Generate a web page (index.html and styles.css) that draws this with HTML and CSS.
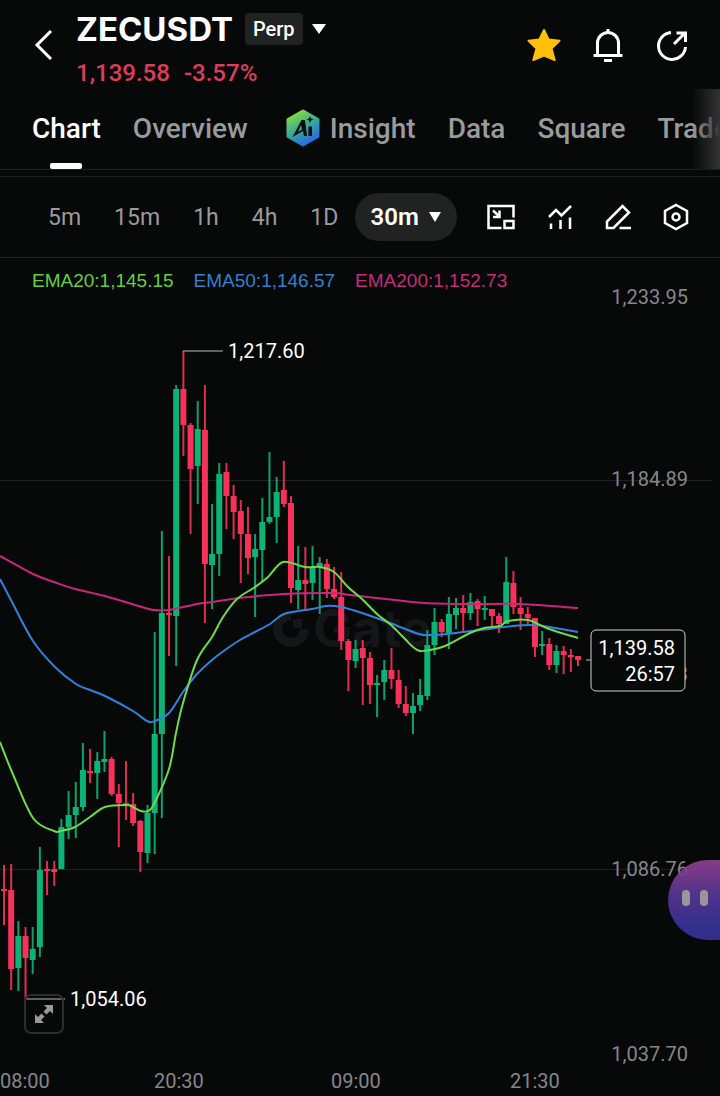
FILE: index.html
```html
<!DOCTYPE html>
<html lang="en">
<head>
    <meta charset="UTF-8">
    <meta name="viewport" content="width=device-width, initial-scale=1.0">
    <title>ZECUSDT Perp</title>
    <link rel="stylesheet" href="styles.css">
</head>
<body>
    <header class="header">
        <button class="icon-btn back-btn" aria-label="Back">
            <svg width="20" height="32" viewBox="0 0 20 32" fill="none" stroke="#fff" stroke-width="3"><path d="M17 2 3 16l14 14"/></svg>
        </button>
        <div class="pair">
            <div class="pair-row">
                <h1>ZECUSDT</h1>
                <button class="market-btn">
                    <span class="badge">Perp</span>
                    <svg width="14" height="10" viewBox="0 0 14 10" fill="#fff"><path d="M0 0h14L7 10z"/></svg>
                </button>
            </div>
            <div class="price-row"><span>1,139.58</span><span>-3.57%</span></div>
        </div>
        <div class="header-actions">
            <button class="icon-btn" aria-label="Favorite">
                <svg width="36" height="36" viewBox="0 0 36 36" fill="#ffc107" stroke="#ffc107" stroke-width="2" stroke-linejoin="round"><path d="m18 3 4.600 9.500 10.900 1.300-8 7.800 3.200 11.400-10.700-4.500-10.700 4.500 3.200-11.400-8-7.800 10.900-1.300z"/></svg>
            </button>
            <button class="icon-btn" aria-label="Alerts">
                <svg width="36" height="36" viewBox="0 0 36 36" fill="none" stroke="#fff" stroke-width="3"><path d="M3.500 28.500h29M7.500 28V16a10.500 10.500 0 0 1 21 0v12M18 2v4M14 33.500h8"/></svg>
            </button>
            <button class="icon-btn" aria-label="Share">
                <svg width="36" height="36" viewBox="0 0 36 36" fill="none" stroke="#fff" stroke-width="3"><path d="M17 5.500A13.500 13.500 0 1 0 31.500 20M20 17 31 6M22.500 6H31.500V15"/></svg>
            </button>
        </div>
    </header>

    <nav class="tabs">
        <a href="#chart" class="tab active">Chart</a>
        <a href="#overview" class="tab">Overview</a>
        <a href="#insight" class="tab tab-ai">
            <svg width="34" height="38" viewBox="0 0 34 38">
                <defs>
                    <linearGradient id="ai" x1="0.2" y1="0" x2="0.7" y2="1">
                        <stop offset="0.1" stop-color="#79d84b"/>
                        <stop offset="0.5" stop-color="#38a99a"/>
                        <stop offset="1" stop-color="#2b62e8"/>
                    </linearGradient>
                </defs>
                <path d="M17 2 32 10.500v17L17 36 2 27.500v-17z" fill="url(#ai)" stroke="url(#ai)" stroke-width="3" stroke-linejoin="round"/>
                <path d="M6.500 28 15.500 11h3.500l2 16h-3l-1-5zM12 23l4-2.500-1-4.500z" fill="#07100c" fill-rule="evenodd"/>
                <path d="M22.500 17.500H26V27h-3.500zM24 7l1 2.500 2.500 1-2.500 1-1 2.500-1-2.500-2.500-1 2.500-1z" fill="#07100c"/>
            </svg>
            Insight
        </a>
        <a href="#data" class="tab">Data</a>
        <a href="#square" class="tab">Square</a>
        <a href="#trade" class="tab">Trade</a>
    </nav>

    <div class="toolbar">
        <div class="intervals">
            <button>5m</button>
            <button>15m</button>
            <button>1h</button>
            <button>4h</button>
            <button>1D</button>
        </div>
        <label class="interval-select">
            <select aria-label="Interval">
                <option>30m</option>
                <option>2h</option>
                <option>1W</option>
            </select>
            <svg width="12" height="10" viewBox="0 0 12 10" fill="#fff"><path d="M0 0h12L6 10z"/></svg>
        </label>
        <div class="tools">
            <button class="icon-btn" aria-label="Floating window">
                <svg width="28" height="26" viewBox="0 0 28 26" fill="none" stroke="#fff" stroke-width="2.500"><path d="M14.500 24H1.500V2h25v11.500M17.500 17h9v7h-9zM6 6.500l6.500 6M12.500 6.500v6.500H6"/></svg>
            </button>
            <button class="icon-btn" aria-label="Indicators">
                <svg width="26" height="26" viewBox="0 0 26 26" fill="none" stroke="#fff" stroke-width="2.500"><path d="M2 13l7-7 5.500 5.500L24 2M4 19.500V25M13.500 16v9M23 13.500V25"/></svg>
            </button>
            <button class="icon-btn" aria-label="Draw">
                <svg width="26" height="26" viewBox="0 0 26 26" fill="none" stroke="#fff" stroke-width="2.500"><path d="M2 24v-6.500L17.500 2 24 8.500 8.500 24zM14.500 24H26"/></svg>
            </button>
            <button class="icon-btn" aria-label="Chart settings">
                <svg width="26" height="28" viewBox="0 0 26 28" fill="none" stroke="#fff" stroke-width="2.500"><path d="M13 2 24 8v12l-11 6L2 20V8z"/><circle cx="13" cy="14" r="3.500"/></svg>
            </button>
        </div>
    </div>

    <main class="chart">
        <div class="legend">
            <span class="ema20">EMA20:1,145.15</span>
            <span class="ema50">EMA50:1,146.57</span>
            <span class="ema200">EMA200:1,152.73</span>
        </div>
        <svg class="plot" viewBox="0 288 720 808">
            <path class="grid" d="M0 480.500h712M0 869.500h712"/>
            <g class="watermark">
                <path d="M291 611a18 18 0 1 0 18 18h-9a9 9 0 1 1-9-9z"/>
                <path d="M293 619h9v9h-9z"/>
                <text x="313" y="647">Gate</text>
            </g>
            <g class="axis price-axis">
                <text x="688" y="304">1,233.95</text>
                <text x="688" y="486">1,184.89</text>
                <text x="688" y="681">1,135.83</text>
                <text x="688" y="876">1,086.76</text>
                <text x="688" y="1061">1,037.70</text>
            </g>
            <g class="axis">
                <text x="0" y="1088">08:00</text>
                <text x="154" y="1088">20:30</text>
                <text x="331" y="1088">09:00</text>
                <text x="510" y="1088">21:30</text>
            </g>
            <g id="candles"></g>
            <g id="emas"></g>
            <path class="marker" d="M183 351h40M25 999h40"/>
            <text class="extreme" x="228" y="358">1,217.60</text>
            <text class="extreme" x="70" y="1006">1,054.06</text>
            <g class="last-price">
                <path d="M586 660h5"/>
                <rect x="591" y="630" width="94" height="61" rx="5"/>
                <text x="675" y="655">1,139.58</text>
                <text x="675" y="681">26:57</text>
            </g>
        </svg>
        <button class="expand-btn" aria-label="Full screen">
            <svg width="20" height="20" viewBox="0 0 20 20" fill="#999"><path d="M10 1h9v9l-3-3-3.500 3.500-3-3L13 4zM10 19H1v-9l3 3 3.500-3.500 3 3L7 16z"/></svg>
        </button>
        <button class="assistant" aria-label="Assistant"><i></i><i></i></button>
    </main>

    <script>
        // high, body top, body bottom, low, up (1) or down (0)
        const candles = [
            [865, 889, 891, 925, 0], [864, 890, 969, 990, 0], [921, 936, 968, 991, 1],
            [927, 936, 958, 999, 0], [927, 949, 960, 974, 1], [847, 870, 947, 957, 1],
            [861, 869, 871, 895, 0], [861, 869, 872, 886, 0], [819, 827, 869, 869, 1],
            [791, 815, 827, 839, 1], [782, 807, 815, 838, 1], [743, 770, 807, 811, 1],
            [749, 771, 773, 783, 0], [752, 761, 773, 799, 1], [731, 759, 762, 772, 1],
            [757, 759, 794, 796, 0], [784, 794, 803, 847, 0], [761, 803, 805, 820, 0],
            [793, 804, 823, 826, 0], [820, 821, 852, 872, 0], [805, 813, 853, 863, 1],
            [632, 734, 813, 854, 1], [531, 613, 734, 818, 1], [556, 613, 615, 656, 0],
            [385, 389, 616, 666, 1], [351, 389, 425, 456, 0], [423, 425, 469, 534, 0],
            [401, 429, 466, 504, 1], [385, 430, 564, 623, 0], [504, 554, 565, 609, 1],
            [463, 474, 554, 576, 1], [463, 472, 496, 529, 0], [485, 496, 512, 539, 0],
            [500, 511, 534, 583, 0], [507, 534, 558, 574, 0], [534, 549, 557, 617, 1],
            [498, 522, 550, 582, 1], [452, 517, 522, 524, 1], [477, 492, 517, 543, 1],
            [461, 490, 504, 507, 0], [496, 503, 588, 603, 0], [546, 580, 590, 609, 1],
            [547, 580, 584, 610, 0], [546, 567, 583, 600, 1], [557, 563, 567, 614, 1],
            [559, 564, 589, 598, 0], [567, 589, 597, 599, 0], [572, 597, 641, 650, 0],
            [639, 641, 660, 691, 0], [640, 649, 661, 668, 1], [640, 648, 658, 705, 0],
            [652, 658, 685, 704, 0], [675, 683, 685, 717, 1], [660, 670, 682, 700, 1],
            [648, 670, 679, 689, 0], [670, 680, 704, 708, 0], [686, 704, 713, 716, 0],
            [693, 706, 713, 734, 1], [679, 695, 705, 711, 1], [630, 645, 696, 700, 1],
            [608, 622, 645, 655, 1], [619, 622, 632, 637, 0], [597, 614, 633, 649, 1],
            [598, 608, 615, 629, 1], [595, 608, 613, 632, 0], [593, 602, 613, 620, 1],
            [599, 601, 609, 626, 0], [596, 608, 610, 620, 1], [609, 609, 616, 626, 0],
            [613, 616, 624, 633, 0], [557, 582, 624, 624, 1], [571, 583, 607, 614, 0],
            [597, 608, 614, 630, 0], [607, 614, 618, 625, 0], [618, 618, 647, 657, 0],
            [631, 644, 646, 655, 1], [638, 644, 665, 670, 0], [645, 651, 665, 673, 1],
            [646, 651, 655, 674, 0], [649, 655, 656, 672, 0], [656, 656, 660, 666, 0]
        ];

        const emas = {
            ema200: '0,556 33,574 54,582 75,589 105,596 145,608 155,610 169,610 197,604 212,602 248,597 284,594 333,593 350,595 395,600 424,603 470,604 520,604 578,608',
            ema50: '0,579 12,602 33,641 55,667 76,684 90,690 105,696 133,711 147,721 155,721 169,713 183,692 197,674 212,660 225,650 240,640 255,632 270,624 284,614 312,609 326,606 341,607 362,613 390,623 419,634 430,635 448,634 480,630 513,626 535,625 549,627 578,632',
            ema20: '0,742 12,772 33,818 54,831 60,831 75,827 90,817 105,807 126,805 133,807 141,811 148,811 154,804 169,769 176,733 183,703 197,660 212,637 223,617 237,599 255,587 268,577 283,562 305,567 320,567 334,572 348,587 362,599 377,614 391,625 405,639 413,647 420,651 430,650 445,646 470,633 484,628 500,626 508,621 528,620 549,629 578,638'
        };

        const START = 4;
        const STEP = 7.175;
        const BODY = 6;

        // Catmull-Rom spline through the points
        function smoothPath(points) {
            const p = points.split(' ').map(pair => pair.split(',').map(Number));
            let d = `M${p[0]}`;
            for (let i = 0; i < p.length - 1; i++) {
                const a = p[i - 1] || p[i];
                const b = p[i];
                const c = p[i + 1];
                const e = p[i + 2] || c;
                d += `C${b[0] + (c[0] - a[0]) / 6},${b[1] + (c[1] - a[1]) / 6} `
                    + `${c[0] - (e[0] - b[0]) / 6},${c[1] - (e[1] - b[1]) / 6} ${c}`;
            }
            return d;
        }

        document.getElementById('candles').innerHTML = candles.map(([high, top, bottom, low, up], i) => {
            const x = START + i * STEP;
            return `<g class="${up ? 'up' : 'down'}">
                <rect class="wick" x="${x - 1}" y="${high}" width="2" height="${low - high}"/>
                <rect x="${x - BODY / 2}" y="${top}" width="${BODY}" height="${Math.max(bottom - top, 2)}"/>
            </g>`;
        }).join('');

        document.getElementById('emas').innerHTML = Object.entries(emas)
            .map(([name, points]) => `<path class="line ${name}" d="${smoothPath(points)}"/>`)
            .join('');
    </script>
</body>
</html>
```
FILE: styles.css
```css
* {
    box-sizing: border-box;
}

body {
    margin: 0;
    background-color: #070808;
    color: #fff;
    font-family: Roboto, sans-serif;
    overflow-x: hidden;
}

button, select {
    margin: 0;
    padding: 0;
    border: none;
    background: none;
    color: inherit;
    font: inherit;
    cursor: pointer;
}

svg {
    display: block;
    flex-shrink: 0;
}

.icon-btn {
    display: flex;
}

/* header */
.header {
    display: flex;
    align-items: center;
    height: 89px;
    padding: 0 30px 0 34px;
}

.pair {
    flex: 1;
    margin-left: 22px;
    padding-top: 8px;
}

.pair-row {
    display: flex;
    align-items: center;
    gap: 12px;
    height: 40px;
}

h1 {
    margin: 0;
    font-family: Inter, sans-serif;
    font-size: 33px;
    font-weight: 700;
    line-height: 40px;
}

.market-btn {
    display: flex;
    align-items: center;
    gap: 9px;
}

.badge {
    padding: 0 8px;
    border-radius: 4px;
    background-color: #212222;
    font-size: 20px;
    font-weight: 500;
    line-height: 32px;
}

.price-row {
    display: flex;
    gap: 14px;
    margin-top: 8px;
    color: #dc3d5a;
    font-size: 24px;
    font-weight: 500;
    line-height: 32px;
}

.header-actions {
    display: flex;
    gap: 28px;
}

/* tabs */
.tabs {
    position: relative;
    display: flex;
    gap: 32px;
    height: 81px;
    padding: 0 32px;
    border-bottom: 1px solid #1e1f1f;
    overflow: hidden;
}

.tabs::after {
    content: "";
    position: absolute;
    top: 0;
    right: 0;
    width: 28px;
    height: 100%;
    background: linear-gradient(to right, rgba(50, 50, 50, 0), #333);
}

.tab {
    position: relative;
    display: flex;
    align-items: center;
    gap: 10px;
    padding-bottom: 2px;
    color: #999b9c;
    font-size: 28px;
    font-weight: 500;
    text-decoration: none;
}

.tab-ai {
    padding-left: 6px;
}

.tab.active {
    color: #fff;
}

.tab.active::after {
    content: "";
    position: absolute;
    bottom: 0;
    left: 50%;
    width: 32px;
    height: 6px;
    margin-left: -16px;
    border-radius: 2px;
    background-color: #fff;
}

/* interval toolbar */
.toolbar {
    display: flex;
    align-items: center;
    justify-content: space-between;
    height: 82px;
    margin-top: 6px;
    padding: 0 31px 0 48px;
    border-top: 1px solid #1e1f1f;
    border-bottom: 1px solid #1e1f1f;
    font-size: 24px;
}

.intervals {
    display: flex;
    gap: 33px;
    color: #999b9c;
    font-size: 23px;
}

.interval-select {
    display: flex;
    align-items: center;
    gap: 10px;
    height: 48px;
    margin-right: 14px;
    padding: 0 16px;
    border-radius: 24px;
    background-color: #212222;
    font-weight: 600;
}

.interval-select select {
    appearance: none;
    field-sizing: content;
    outline: none;
}

.tools {
    display: flex;
    align-items: center;
    gap: 32px;
}

/* chart */
.chart {
    position: relative;
}

.legend {
    display: flex;
    gap: 20px;
    height: 30px;
    padding: 8px 32px 0;
    font-family: "Liberation Sans", Arial, sans-serif;
    font-size: 19px;
    line-height: 30px;
    white-space: nowrap;
}

.legend .ema20 {
    color: #62cf42;
}

.legend .ema50 {
    color: #3480cf;
}

.legend .ema200 {
    color: #c52c79;
}

.plot {
    width: 100%;
    height: auto;
    font-size: 20px;
    overflow: visible;
}

.grid {
    stroke: #202122;
}

.watermark {
    fill: #141617;
    font-family: Inter, sans-serif;
    font-size: 52px;
    font-weight: 700;
}

.axis {
    fill: #85878a;
}

.price-axis {
    text-anchor: end;
}

.up {
    fill: #0cb377;
}

.down {
    fill: #f6325a;
}

.wick {
    opacity: 0.9;
}

.line {
    fill: none;
    stroke-width: 2;
}

.line.ema20 {
    stroke: #6edc46;
}

.line.ema50 {
    stroke: #2f83dc;
}

.line.ema200 {
    stroke: #c8277a;
}

.marker {
    stroke: #b9b9b9;
    stroke-width: 1;
}

.extreme {
    fill: #fff;
}

.last-price {
    fill: #fff;
    text-anchor: end;
}

.last-price path {
    stroke: #b9b9b9;
    stroke-width: 1;
}

.last-price rect {
    fill: #070808;
    stroke: #d0d0d0;
    stroke-width: 1;
}

.expand-btn {
    position: absolute;
    left: 24px;
    bottom: 62px;
    display: flex;
    align-items: center;
    justify-content: center;
    width: 40px;
    height: 40px;
    border: 2px solid #2c2d2e;
    border-radius: 7px;
}

.assistant {
    position: absolute;
    right: 0;
    bottom: 156px;
    display: flex;
    align-items: center;
    gap: 10px;
    width: 52px;
    height: 80px;
    padding: 0 0 4px 14px;
    border-radius: 40px 0 0 40px;
    background: linear-gradient(rgba(148, 64, 146, 0.9), rgba(78, 52, 146, 0.95) 50%, #322f8c 85%);
}

.assistant i {
    width: 8px;
    height: 16px;
    border-radius: 4px;
    background-color: #98979c;
}
```
